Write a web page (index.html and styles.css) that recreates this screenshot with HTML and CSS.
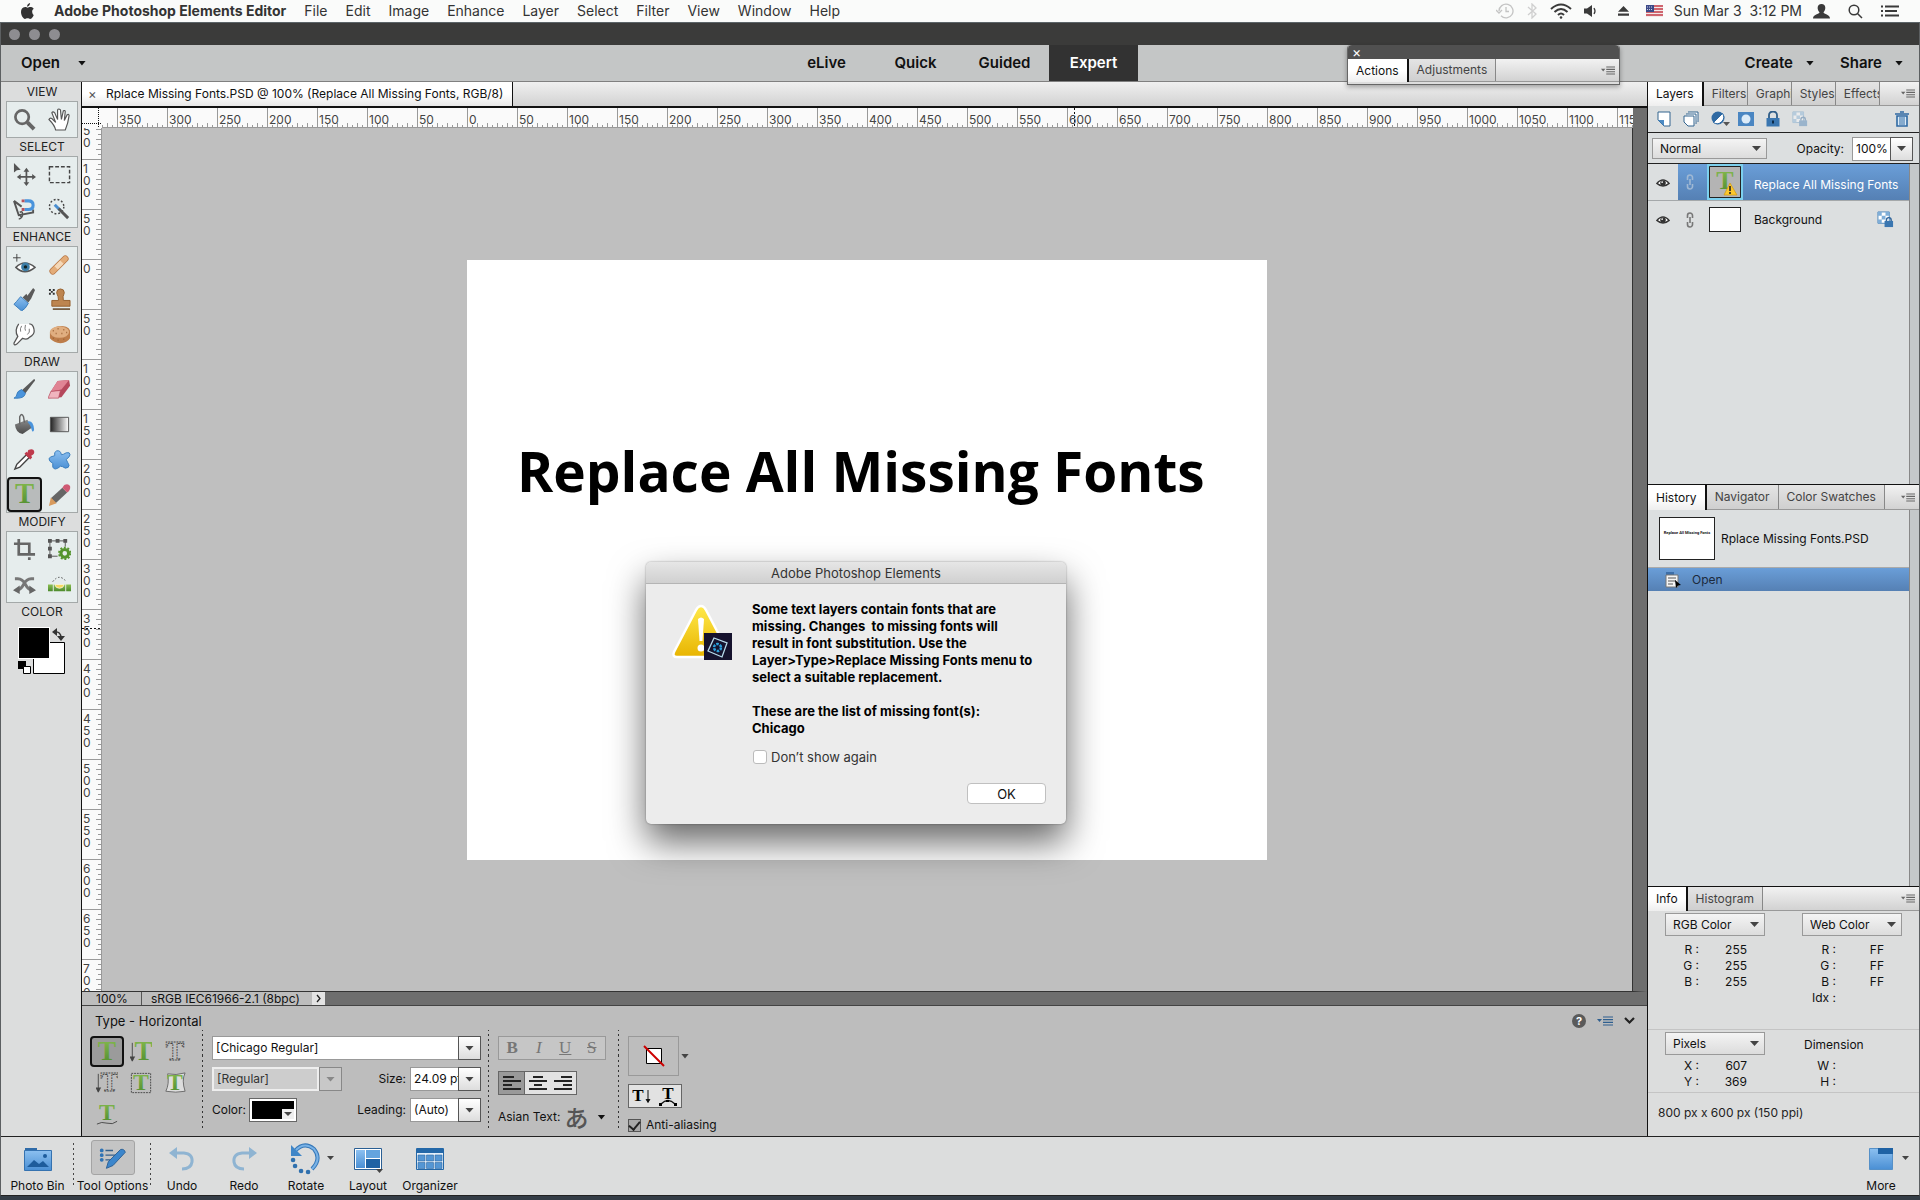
FILE: index.html
```html
<!DOCTYPE html>
<html lang="en">
<head>
<meta charset="utf-8">
<title>Adobe Photoshop Elements Editor</title>
<link rel="stylesheet" href="styles.css">
</head>
<body>
<svg class="defs" aria-hidden="true">
  <defs>
    <linearGradient id="green" x1="0" y1="0" x2="0" y2="1"><stop offset="0" stop-color="#8bbf52"/><stop offset="1" stop-color="#4c8a2c"/></linearGradient>
    <linearGradient id="blue" x1="0" y1="0" x2="0" y2="1"><stop offset="0" stop-color="#8cc0f0"/><stop offset="1" stop-color="#4a8fd4"/></linearGradient>
    <linearGradient id="dark" x1="0" y1="0" x2="0" y2="1"><stop offset="0" stop-color="#8a8a8a"/><stop offset="1" stop-color="#4a4a4a"/></linearGradient>
    <linearGradient id="fade" x1="0" y1="0" x2="1" y2="0"><stop offset="0" stop-color="#222"/><stop offset="1" stop-color="#fff"/></linearGradient>
    <linearGradient id="gold" x1="0" y1="0" x2="0" y2="1"><stop offset="0" stop-color="#ffe94a"/><stop offset="1" stop-color="#e8b400"/></linearGradient>
  </defs>
  <symbol id="panel-menu" viewBox="0 0 16 10"><path d="M0 3h5L2.500 6z"/><path d="M6 1h10M6 3.700h10M6 6.400h10M6 9h10" stroke="currentColor" stroke-width="1.200"/></symbol>
  <symbol id="eye" viewBox="0 0 16 12"><path d="M1 7Q8-1 15 7Q8 13 1 7z" fill="#fff" stroke="#333" stroke-width="1.600"/><circle cx="8" cy="6.500" r="3.200" fill="#333"/><circle cx="7" cy="5.500" r="1" fill="#fff"/></symbol>
  <symbol id="link" viewBox="0 0 8 16"><path d="M1.500 6V3.500a2.500 2.500 0 0 1 5 0V6M1.500 10v2.500a2.500 2.500 0 0 0 5 0V10M4 5v6" fill="none" stroke="currentColor" stroke-width="1.600"/></symbol>
  <symbol id="checker-lock" viewBox="0 0 18 18"><path d="M1 1h12v12H1z" fill="#fff" stroke="#4c87bb"/><path d="M1 1h4v4H1zM9 1h4v4H9zM5 5h4v4H5zM1 9h4v4H1z" fill="#7faed8"/><path d="M10 11V9.500a2.500 2.500 0 0 1 5 0V11" fill="none" stroke="#2e6399" stroke-width="1.500"/><path d="M8 10.500h9V17H8z" fill="#3a76b0"/></symbol>
</svg>

<header class="menubar">
  <svg class="apple" viewBox="0 0 14 17"><path d="M9.800 0C9.900 2 8.300 3.900 6.500 3.900 6.300 2.100 8 .2 9.800 0zM12 9c0-2 1.700-2.800 1.700-2.900C12.500 4.500 11 4.300 10.300 4.300 9 4.200 7.900 5 7.200 5 6.500 5 5.500 4.300 4.400 4.300 1.500 4.400 0 6.800 0 9.500 0 13 2.500 17 4.300 17c1 0 1.500-.7 2.800-.7s1.700.7 2.800.7c1.900 0 3.500-3.400 3.800-4.300C13.600 12.700 12 11.700 12 9z"/></svg>
  <nav class="menus">
    <a href="#" class="app">Adobe Photoshop Elements Editor</a><a href="#">File</a><a href="#">Edit</a><a href="#">Image</a><a href="#">Enhance</a><a href="#">Layer</a><a href="#">Select</a><a href="#">Filter</a><a href="#">View</a><a href="#">Window</a><a href="#">Help</a>
  </nav>
  <div class="status">
    <svg width="18" height="16" viewBox="0 0 18 16" fill="none" stroke="#c4c4c4" stroke-width="1.300"><path d="M3 8a7 6.800 0 1 1 2 4.800M0 7l3 3 3-3M10 4v4.500h3"/></svg>
    <svg class="bt" width="10" height="16" viewBox="0 0 10 16" fill="none" stroke="#cfcfcf" stroke-width="1.300"><path d="M1 4l8 7-4 4V1l4 4-8 7"/></svg>
    <svg width="22" height="16" viewBox="0 0 22 16" fill="none" stroke="#3a3a3a" stroke-width="2"><path d="M1 6Q11-3 21 6M4.500 9Q11 3 17.500 9M8 12q3-3 6 0"/><circle cx="11" cy="14.500" r="1.300" fill="#3a3a3a" stroke="none"/></svg>
    <svg width="18" height="14" viewBox="0 0 18 14"><path d="M1 4.500h3L9 1v12L4 9.500H1z" fill="#3a3a3a"/><path d="M11 4q2 3 0 6" fill="none" stroke="#3a3a3a" stroke-width="1.300"/></svg>
    <svg class="eject" width="11" height="12" viewBox="0 0 13 12" fill="#3a3a3a"><path d="M6.500 0L13 7H0zM0 9h13v2.500H0z"/></svg>
    <svg width="17" height="12" viewBox="0 0 17 12"><path d="M0 0h17v12H0z" fill="#f3e8e8"/><path d="M0 1h17M0 4h17M0 7h17M0 10h17" stroke="#c43a46" stroke-width="1.500"/><path d="M0 0h8v7H0z" fill="#3c4a88"/><path d="M1 2h6M1 4.500h6" stroke="#c8cce0" stroke-dasharray="1 1"/></svg>
    <time>Sun Mar 3&nbsp; 3:12 PM</time>
    <svg width="17" height="15" viewBox="0 0 17 15" fill="#3a3a3a"><path d="M8.500 0c5 0 4.500 6 2 8.300.2 2 6.500 2 6.500 6.200H0C0 10.300 6.300 10.300 6.500 8.300 4 6 3.500 0 8.500 0z"/></svg>
    <svg width="15" height="15" viewBox="0 0 15 15" fill="none" stroke="#3a3a3a" stroke-width="1.500"><circle cx="6" cy="6" r="4.800"/><path d="M9.500 9.500L14 14"/></svg>
    <svg width="18" height="12" viewBox="0 0 18 12" stroke="#3a3a3a" stroke-width="2"><path d="M0 1.500h2M4 1.500h14M0 6h2M4 6h12M0 10.500h2M4 10.500h14"/></svg>
  </div>
</header>

<main class="window">
  <div class="titlebar"><i></i><i></i><i></i></div>
  <div class="modebar">
    <div><button class="drop">Open</button></div>
    <nav class="modes"><button>eLive</button><button>Quick</button><button>Guided</button><button class="on">Expert</button></nav>
    <div class="right"><button class="drop">Create</button><button class="drop">Share</button></div>
  </div>

  <div class="workspace">
    <aside class="toolbox">
      <h2>VIEW</h2>
      <div class="tools">
        <button aria-label="Zoom"><svg viewBox="0 0 24 24" fill="none" stroke="#666"><circle cx="9.500" cy="9.500" r="7" stroke-width="2.800"/><path d="M15 15l7 7" stroke-width="4.200"/></svg></button>
        <button aria-label="Hand"><svg viewBox="0 0 24 24"><path d="M8 23Q7 18 1 12q1-2 3-1l4 4L4 5q1-2 3 0l3 7L10 2q1-2 3 0l1 10 2-9q2-1 2 1l-1 9 3-6q2-1 2 1-1 8-4 15z" fill="#fff" stroke="#555" stroke-width="1.200"/></svg></button>
      </div>
      <h2>SELECT</h2>
      <div class="tools">
        <button aria-label="Move"><svg viewBox="0 0 24 24"><path d="M1 0l7 7-4 .5L1 10z" fill="#555"/><path d="M14 7v15M6 14.500h16" stroke="#555" stroke-width="1.800"/><path d="M14 5l3 4h-6zM14 24l3-4h-6zM4 14.500l4-3v6zM24 14.500l-4-3v6z" fill="#555"/></svg></button>
        <button aria-label="Marquee"><svg viewBox="0 0 24 24"><path d="M1.500 4h21v16.500h-21z" fill="none" stroke="#444" stroke-width="1.500" stroke-dasharray="4 2"/></svg></button>
        <button aria-label="Lasso"><svg viewBox="0 0 24 24"><path d="M1 3l5 15 15-3v-3M1 3l8 6" fill="none" stroke="#555" stroke-width="2"/><path d="M7 15q3-2 3 2t-4 5M6 17l3 3" fill="none" stroke="#555" stroke-width="1.500"/><path d="M12 3h4q5 0 5 4.500T16 12h-4" fill="none" stroke="#4a94dc" stroke-width="3.200"/><path d="M9 1.500h3v3H9zM9 10.500h3v3H9z" fill="#b8505c"/></svg></button>
        <button aria-label="Quick selection"><svg viewBox="0 0 24 24"><circle cx="9" cy="9" r="7.500" fill="none" stroke="#444" stroke-width="1.500" stroke-dasharray="2 2"/><path d="M7 7l6 6" stroke="#4a8ed0" stroke-width="3"/><path d="M11 11l10 10" stroke="#555" stroke-width="3"/></svg></button>
      </div>
      <h2>ENHANCE</h2>
      <div class="tools">
        <button aria-label="Red eye"><svg viewBox="0 0 24 24"><path d="M4 1v8M0 5h8" stroke="#444"/><path d="M3 15q9-9 20 0-11 9-20 0z" fill="#fff" stroke="#555" stroke-width="1.500"/><circle cx="13" cy="14.500" r="4.500" fill="#3b7da6"/><circle cx="13" cy="14.500" r="1.800" fill="#122"/></svg></button>
        <button aria-label="Spot healing"><svg viewBox="0 0 24 24"><path d="M5 19L18 6" stroke="#b87746" stroke-width="7" stroke-linecap="round"/><path d="M5 19L18 6" stroke="#e3ac78" stroke-width="5.500" stroke-linecap="round"/><path d="M8.500 15.500l6-6" stroke="#f4d8b8" stroke-width="5"/></svg></button>
        <button aria-label="Smart brush"><svg viewBox="0 0 24 24"><path d="M15 8l6-8 2 2-4 9-3 4-6-5 4-4z" fill="#5a5a5a"/><path d="M8 9l8 7q-3 6-7 8L1 17q2-2 7-8z" fill="url(#blue)" stroke="#3a7dbd"/></svg></button>
        <button aria-label="Clone stamp"><svg viewBox="0 0 24 24"><path d="M1 1h2v2H1zM5 1h2v2H5zM3 3h2v2H3zM1 5h2v2H1zM5 5h2v2H5z" fill="#333"/><path d="M13 1q4 0 4 4-2 4-1 8h7v6H4v-6h7q0-4-2-8 0-4 4-4z" fill="#bd8550" stroke="#96602e"/><path d="M5 22h18" stroke="#5b3a1a" stroke-width="1.500"/></svg></button>
        <button aria-label="Smudge"><svg viewBox="0 0 24 24"><path d="M6 1q-5 7-1 13L1 21q0 3 3 1l6-6q5 2 7-1 6-3 5-8-1-6-5-6" fill="#fff" stroke="#555" stroke-width="1.300"/><path d="M9 3q-2 3-1 6M13 2q-1 4 0 6M17 6q1 4-2 6" fill="none" stroke="#777"/></svg></button>
        <button aria-label="Sponge"><svg viewBox="0 0 24 24"><path d="M2 9q3-6 13-6 9 1 8 7v6q-3 5-10 5T2 16z" fill="#bd7d4a"/><ellipse cx="12" cy="9.500" rx="10" ry="6" fill="#e0ae80"/><path d="M5 8h1m4-2h1m5 1h1M8 11h1m5 0h1m4-1h1M5 16h1m4 2h1m5-1h1" stroke="#9c6233" stroke-width="1.500"/></svg></button>
      </div>
      <h2>DRAW</h2>
      <div class="tools">
        <button aria-label="Brush"><svg viewBox="0 0 24 24"><path d="M22 1q2 1 0 3L13 16l-4-3z" fill="#5a5a5a"/><path d="M9 12l4 4q-1 6-12 5 3-1 3-4t5-5z" fill="#4a94dc" stroke="#3a7dbd"/></svg></button>
        <button aria-label="Eraser"><svg viewBox="0 0 24 24"><path d="M10 3l12-1 1 6-9 12-13 1 2-7z" fill="#b5485c"/><path d="M10 3l12-1-8 10-11 2z" fill="#e08494"/><path d="M3 14l10-1-2 8H0z" fill="#f0b4be" stroke="#b5485c" stroke-width=".7"/></svg></button>
        <button aria-label="Paint bucket"><svg viewBox="0 0 24 24"><path d="M2 12l13-5 5 8-10 7q-7-1-8-10z" fill="url(#dark)"/><path d="M7 12V4q2-5 4 0l1 6" fill="none" stroke="#666" stroke-width="1.500"/><path d="M15 9q6-2 7 8 0 3-2 2l-2-6z" fill="#4a94dc"/></svg></button>
        <button aria-label="Gradient"><svg viewBox="0 0 24 24"><path d="M2.500 4.500h19v15h-19z" fill="url(#fade)" stroke="#555"/></svg></button>
        <button aria-label="Color picker"><svg viewBox="0 0 24 24"><path d="M2 22l2-5L14 7l3 3L7 20z" fill="#fff" stroke="#444" stroke-width="1.500"/><path d="M12 6l6 6 2-2-1-2q4-2 3-5t-6-1l-1 3-1-1z" fill="#bf3a4c"/></svg></button>
        <button aria-label="Custom shape"><svg viewBox="0 0 24 24"><path d="M9 3Q13 2 14 7q2 0 5-2 4-1 4 2 0 2-4 5 2 4 3 6 0 3-4 3-3-2-5-2-3 3-6 3-3-1-2-6-4-2-4-5 1-2 6-3-1-4 2-5z" fill="url(#blue)" stroke="#3a7dbd"/></svg></button>
        <button aria-label="Type" class="on"><svg viewBox="0 0 24 24"><text x="12" y="21" class="tee">T</text></svg></button>
        <button aria-label="Pencil"><svg viewBox="0 0 24 24"><path d="M15 5l5 5L8 21l-5-5z" fill="#666"/><path d="M3 15l6 6-8 3z" fill="#d89a5c"/><path d="M15 5l2-3q4-2 6 1 1 4-3 7z" fill="#cf5a74"/></svg></button>
      </div>
      <h2>MODIFY</h2>
      <div class="tools">
        <button aria-label="Crop"><svg viewBox="0 0 24 24" fill="none" stroke="#666" stroke-width="2.800"><path d="M6 1v16h17M1 6h16v11M17 20v3"/></svg></button>
        <button aria-label="Recompose"><svg viewBox="0 0 24 24"><path d="M2 3h16v6M2 3v16h8" fill="none" stroke="#555"/><path d="M0 1h4v4H0zM8 1h4v4H8zM16 1h4v4h-4zM0 9h4v4H0zM0 17h4v4H0z" fill="#555"/><circle cx="17.500" cy="16" r="4" fill="none" stroke="#55942e" stroke-width="3.200"/><circle cx="17.500" cy="16" r="6" fill="none" stroke="#55942e" stroke-width="2" stroke-dasharray="2 1.800"/></svg></button>
        <button aria-label="Content-aware move"><svg viewBox="0 0 24 24"><path d="M2 6h3q5 0 8 6t8 6M22 6h-3q-5 0-8 6t-8 6" fill="none" stroke="#777" stroke-width="3"/><path d="M0 18l7-5v9zM24 18l-7-5v9z" fill="#666"/></svg></button>
        <button aria-label="Straighten"><svg viewBox="0 0 24 24"><path d="M0 12h5v7H0zM6 12h12v7H6zM19 12h5v7h-5z" fill="url(#green)"/><path d="M7 12h10q-1 4-5 4t-5-4z" fill="#f6d860" stroke="#fff" stroke-width=".7"/><path d="M5 9q7-9 14 0" fill="none" stroke="#444" stroke-dasharray="1.500 2"/></svg></button>
      </div>
      <h2>COLOR</h2>
      <svg class="colors" width="48" height="50" viewBox="0 0 48 50"><path d="M15.500 16.500h31v31h-31z" fill="#fff" stroke="#000"/><path d="M0 1h32v32H0z" fill="#fff"/><path d="M1 2h30v30H1z"/><path d="M36 6q7-1 7 6" fill="none" stroke="#333" stroke-width="1.500"/><path d="M34 6l5-4v8zM43 15l-4-5h8z" fill="#333"/><path d="M0 35h8v8H0z"/><path d="M5.500 40.500h7v7h-7z" fill="#fff" stroke="#000"/></svg>
    </aside>

    <section class="center">
      <div class="doctabs"><button class="doctab"><span class="x">×</span>Rplace Missing Fonts.PSD @ 100% (Replace All Missing Fonts, RGB/8)</button></div>
      <div class="docarea">
        <div class="corner"></div>
        <ol class="ruler-h"><li>350</li><li>300</li><li>250</li><li>200</li><li>150</li><li>100</li><li>50</li><li>0</li><li>50</li><li>100</li><li>150</li><li>200</li><li>250</li><li>300</li><li>350</li><li>400</li><li>450</li><li>500</li><li>550</li><li class="mark">600</li><li>650</li><li>700</li><li>750</li><li>800</li><li>850</li><li>900</li><li>950</li><li>1000</li><li>1050</li><li>1100</li><li>1150</li></ol>
        <div class="ruler-v"><ol><li>150</li><li>100</li><li>50</li><li>0</li><li>50</li><li>100</li><li>150</li><li>200</li><li>250</li><li>300</li><li class="mark">350</li><li>400</li><li>450</li><li>500</li><li>550</li><li>600</li><li>650</li><li>700</li></ol></div>
        <div class="pasteboard"><div class="artboard"><p>Replace All Missing Fonts</p></div></div>
      </div>
      <div class="docstatus"><span class="zoom">100%</span><span class="profile">sRGB IEC61966-2.1 (8bpc)</span><button aria-label="More info"><svg width="5" height="9" viewBox="0 0 5 9" fill="none" stroke="#222" stroke-width="1.300"><path d="M1 1l3 3.500L1 8"/></svg></button></div>

      <div class="options">
        <div class="opt-head"><h3>Type - Horizontal</h3>
          <div class="opt-icons">
            <svg width="14" height="14" viewBox="0 0 14 14"><circle cx="7" cy="7" r="7" fill="#5a5a5a"/><text x="7" y="11" class="q">?</text></svg>
            <svg class="bluemenu" width="16" height="10"><use href="#panel-menu"/></svg>
            <svg width="11" height="8" viewBox="0 0 11 8"><path d="M1 1l4.500 4.500L10 1" fill="none" stroke="#222" stroke-width="2.200"/></svg>
          </div>
        </div>
        <div class="opt-body">
          <div class="types">
            <button class="on" aria-label="Horizontal type"><svg viewBox="0 0 24 24"><text x="12" y="21" class="tee">T</text></svg></button>
            <button aria-label="Vertical type"><svg viewBox="0 0 24 24"><text x="15" y="21" class="tee">T</text><path d="M2.500 2v18M0 17l2.500 5L5 17" stroke="#444" fill="#444"/></svg></button>
            <button aria-label="Horizontal mask"><svg viewBox="0 0 24 24"><text x="12" y="21" class="tee dash">T</text></svg></button>
            <button aria-label="Vertical mask"><svg viewBox="0 0 24 24"><text x="15" y="21" class="tee dash">T</text><path d="M2.500 2v18M0 17l2.500 5L5 17" stroke="#444" fill="#444"/></svg></button>
            <button aria-label="Type on selection"><svg viewBox="0 0 24 24"><path d="M1.500 1.500h21v21h-21z" fill="none" stroke="#444" stroke-dasharray="2 1"/><text x="12" y="20" class="tee small">T</text></svg></button>
            <button aria-label="Type on shape"><svg viewBox="0 0 24 24"><path d="M4 2q9 2 19-1-4 8 0 20-10 2-21 0 4-8 2-19z" fill="#ddd" stroke="#666"/><text x="12" y="20" class="tee small">T</text></svg></button>
            <button aria-label="Type on path"><svg viewBox="0 0 24 24"><text x="12" y="18" class="tee small">T</text><path d="M1 23q5-3 11-1t11-2" fill="none" stroke="#444"/></svg></button>
          </div>
          <div class="fonts">
            <div class="row"><span class="combo wide"><input aria-label="Font" value="[Chicago Regular]"><button class="arrow" aria-label="Fonts"></button></span></div>
            <div class="row"><span class="combo style"><input aria-label="Style" value="[Regular]" disabled><button class="arrow" aria-label="Styles" disabled></button></span><label for="size">Size:</label><span class="combo"><input id="size" value="24.09 pt"><button class="arrow" aria-label="Sizes"></button></span></div>
            <div class="row"><span>Color:</span><button class="swatch" aria-label="Text color"><svg width="12" height="10" viewBox="0 0 12 10"><path d="M0 0h12v10H0z" fill="#eee"/><path d="M2 3h8L6 7z" fill="#444"/></svg></button><label for="lead">Leading:</label><span class="combo"><input id="lead" value="(Auto)"><button class="arrow" aria-label="Leadings"></button></span></div>
          </div>
          <div class="format">
            <div class="biu"><button><b>B</b></button><button><i>I</i></button><button><u>U</u></button><button><s>S</s></button></div>
            <div class="align">
              <button class="on" aria-label="Left"><svg viewBox="0 0 18 16"><path d="M0 2h11M0 6h18M0 10h9M0 14h18"/></svg></button>
              <button aria-label="Center"><svg viewBox="0 0 18 16"><path d="M4 2h10M0 6h18M5 10h8M0 14h18"/></svg></button>
              <button aria-label="Right"><svg viewBox="0 0 18 16"><path d="M7 2h11M0 6h18M9 10h9M0 14h18"/></svg></button>
            </div>
            <div class="asian">Asian Text:<button class="drop"><span lang="ja">あ</span></button></div>
          </div>
          <div class="effects">
            <div class="stylebox"><button aria-label="Style"><svg width="22" height="22" viewBox="0 0 22 22"><path d="M3.500 3.500h15v15h-15z" fill="#fff" stroke="#000"/><path d="M1 1l20 20" stroke="#c00" stroke-width="2"/></svg></button><i class="tri"></i></div>
            <div class="orient">
              <button aria-label="Toggle orientation"><svg width="20" height="20" viewBox="0 0 20 20"><text x="6" y="15" class="serif">T</text><path d="M16 4v12M14 13l2 3.500 2-3.500" stroke="#111" fill="#111"/></svg></button>
              <button aria-label="Warp"><svg width="20" height="20" viewBox="0 0 20 20"><text x="10" y="13" class="serif">T</text><path d="M3 18q7-7 14 0" fill="none" stroke="#111" stroke-width="1.300"/><path d="M1 17h3v3H1zM8 14h3v2H8zM16 17h3v3h-3z"/></svg></button>
            </div>
            <label class="aa"><input type="checkbox" checked>Anti-aliasing</label>
          </div>
        </div>
      </div>
    </section>

    <aside class="panels">
      <section class="panel layers">
        <div class="tabs"><button class="on">Layers</button><button class="cut">Filters</button><button class="cut">Graphics</button><button class="cut">Styles</button><button class="cut">Effects</button><button class="pm" aria-label="Panel menu"><svg width="14" height="9"><use href="#panel-menu"/></svg></button></div>
        <div class="layer-tools">
          <svg viewBox="0 0 16 16"><path d="M2 1h12v14H8L2 9z" fill="#fff" stroke="#33648f"/><path d="M2 9h6v6z" fill="#4b8ac4"/></svg>
          <svg viewBox="0 0 16 16"><path d="M5 1h10v10M3 3h10v10" fill="#fff" stroke="#33648f"/><path d="M1 5h10v10H5l-4-4z" fill="#fff" stroke="#33648f"/></svg>
          <svg class="adjust" viewBox="0 0 20 16"><circle cx="8" cy="7" r="6.500" fill="#2f6aa3"/><path d="M12.500 2.500a6.500 6.500 0 0 1-9 9z" fill="#fff" stroke="#2f6aa3"/><path d="M13 11h7l-3.500 4z" fill="#555"/></svg>
          <svg viewBox="0 0 16 16"><path d="M0 1h16v14H0z" fill="#4a86c2"/><circle cx="8" cy="8" r="4.500" fill="#dcebf8"/></svg>
          <svg viewBox="0 0 16 16"><path d="M4 8V4a4 3.500 0 0 1 8 0v4" fill="none" stroke="#2f5d88" stroke-width="1.800"/><path d="M1.500 7h13v8.500h-13z" fill="#3a76b0"/><path d="M8 9.500v3" stroke="#0c2a48" stroke-width="2"/></svg>
          <svg class="dim"><use href="#checker-lock"/></svg>
          <svg class="trash" viewBox="0 0 16 16"><path d="M1 3h14M6 1h4M3 5h10v10H3z" fill="#dcebf8" stroke="#2f6aa3" stroke-width="1.600"/><path d="M6 6v8M8 6v8M10 6v8" stroke="#2f6aa3"/></svg>
        </div>
        <div class="blend"><span class="select"><select aria-label="Blend mode"><option>Normal</option></select></span><label for="opacity">Opacity:</label><span class="combo op"><input id="opacity" value="100%"><button class="arrow" aria-label="Opacity slider"></button></span></div>
        <div class="scroll">
          <div class="layer on"><svg class="eye"><use href="#eye"/></svg><div class="name"><svg class="lnk"><use href="#link"/></svg><svg class="thumb sel" viewBox="0 0 32 32"><path d="M.5.5h31v31H.5z" fill="#b4b4b4" stroke="#222"/><text x="16" y="23" class="tee small">T</text><path d="M21 17l7 12H15z" fill="#fbc72c" stroke="#d39a10" stroke-width=".7"/><path d="M21 20v5M21 26v2" stroke="#222" stroke-width="1.600"/></svg><span>Replace All Missing Fonts</span></div></div>
          <div class="layer"><svg class="eye"><use href="#eye"/></svg><div class="name"><svg class="lnk"><use href="#link"/></svg><span class="thumb blank"></span><span>Background</span><svg class="lock"><use href="#checker-lock"/></svg></div></div>
        </div>
      </section>
      <section class="panel history">
        <div class="tabs"><button class="on">History</button><button>Navigator</button><button>Color Swatches</button><button class="pm" aria-label="Panel menu"><svg width="14" height="9"><use href="#panel-menu"/></svg></button></div>
        <div class="scroll">
          <div class="snapshot"><div class="mini">Replace All Missing Fonts</div>Rplace Missing Fonts.PSD</div>
          <div class="state"><svg width="16" height="16" viewBox="0 0 16 16"><path d="M1 0h8v3H1z" fill="#3c6ea8"/><path d="M1 3h12v12H1z" fill="#f4f4f4" stroke="#777"/><path d="M3 6h8M3 9h8M3 12h5" stroke="#555"/><path d="M10 8l6 5-3 .5-2 2.500z"/></svg>Open</div>
        </div>
      </section>
      <section class="panel info">
        <div class="tabs"><button class="on">Info</button><button>Histogram</button><button class="pm" aria-label="Panel menu"><svg width="14" height="9"><use href="#panel-menu"/></svg></button></div>
        <div class="pair top">
          <div><span class="select"><select aria-label="First color mode"><option>RGB Color</option></select></span><dl><dt>R :</dt><dd>255</dd><dt>G :</dt><dd>255</dd><dt>B :</dt><dd>255</dd></dl></div>
          <div><span class="select"><select aria-label="Second color mode"><option>Web Color</option></select></span><dl><dt>R :</dt><dd>FF</dd><dt>G :</dt><dd>FF</dd><dt>B :</dt><dd>FF</dd><dt>Idx :</dt><dd></dd></dl></div>
        </div>
        <div class="pair bottom">
          <div><span class="select"><select aria-label="Units"><option>Pixels</option></select></span><dl><dt>X :</dt><dd>607</dd><dt>Y :</dt><dd>369</dd></dl></div>
          <div><h4>Dimension</h4><dl><dt>W :</dt><dd></dd><dt>H :</dt><dd></dd></dl></div>
        </div>
        <p>800 px x 600 px (150 ppi)</p>
      </section>
    </aside>
  </div>

  <footer class="taskbar">
    <button class="bin"><svg width="28" height="24" viewBox="0 0 28 24"><path d="M1 3V1h12v3z" fill="#2f6ba8"/><path d="M.5 3.500h27v20H.5z" fill="url(#blue)" stroke="#3572b0"/><path d="M3 20l7-7 5 4 4-3 6 6z" fill="#1d5c9c"/><circle cx="21" cy="9" r="2" fill="#1d5c9c"/></svg><span>Photo Bin</span></button>
    <button class="tool on"><svg width="44" height="35" viewBox="0 0 44 35"><path d="M14 10h8M14 15h11M14 20h6" stroke="#345f8a" stroke-width="1.500"/><path d="M10 10h.1M10 15h.1M10 20h.1" stroke="#2f73b5" stroke-width="4" stroke-linecap="round"/><path d="M30 9q4-1 5 3L22 26l-7 3 2-7z" fill="#3c86cc" stroke="#2a5f94"/></svg><span>Tool Options</span></button>
    <button><svg width="26" height="26" viewBox="0 0 26 26"><path d="M3 7h12q9 1 8 9-1 7-10 7" fill="none" stroke="#8fb4d2" stroke-width="3"/><path d="M0 7l8-6v12z" fill="#8fb4d2"/></svg><span>Undo</span></button>
    <button><svg width="26" height="26" viewBox="0 0 26 26"><path d="M23 7H11q-9 1-8 9 1 7 10 7" fill="none" stroke="#8fb4d2" stroke-width="3"/><path d="M26 7l-8-6v12z" fill="#8fb4d2"/></svg><span>Redo</span></button>
    <button class="has"><svg width="32" height="32" viewBox="0 0 32 32"><path d="M5 8Q14-2 24 6q8 10-2 20" fill="none" stroke="#3678b8" stroke-width="4"/><path d="M5 8Q14-2 24 6q8 10-2 20" fill="none" stroke="#79b2e6" stroke-width="2"/><path d="M1 2v11h11z" fill="#3f86c8"/><path d="M3 17h.1M5 23h.1M11 28h.1M18 29h.1" stroke="#2f70ae" stroke-width="4.500" stroke-linecap="round"/></svg><span>Rotate</span></button>
    <button class="has low"><svg width="28" height="22" viewBox="0 0 28 22"><path d="M.5.5h27v21H.5z" fill="#fff" stroke="#2a5f94"/><path d="M2 2h9v18H2z" fill="url(#blue)"/><path d="M12 2h14v8H12z" fill="#64a4de"/><path d="M12 11h14v9H12z" fill="#1f62a4"/></svg><span>Layout</span></button>
    <button><svg width="28" height="22" viewBox="0 0 28 22"><path d="M.5.5h27v21H.5z" fill="#e4effa" stroke="#2468a8"/><path d="M1 1h26v4H1z" fill="#2468a8"/><path d="M2 7h7v6H2zM10.500 7h7v6h-7zM19 7h7v6h-7zM2 14.500h7v6H2zM10.500 14.500h7v6h-7zM19 14.500h7v6h-7z" fill="#5496d4" stroke="#2f6aa3" stroke-width=".6"/></svg><span>Organizer</span></button>
    <button class="has more"><svg width="24" height="22" viewBox="0 0 24 22"><path d="M.5.5h23v21H.5z" fill="url(#blue)" stroke="#5590c8"/><path d="M9 0h15v6H9z" fill="#1f62a4"/></svg><span>More</span></button>
  </footer>
</main>

<section class="floating">
  <div class="grip">×</div>
  <div class="tabs"><button class="on">Actions</button><button>Adjustments</button><button class="pm" aria-label="Panel menu"><svg width="14" height="9"><use href="#panel-menu"/></svg></button></div>
</section>

<section class="dialog" role="dialog" aria-labelledby="dlg">
  <h1 id="dlg">Adobe Photoshop Elements</h1>
  <div class="dlg-body">
    <svg width="62" height="60" viewBox="0 0 62 60"><path d="M30 3q3 0 5 4l22 42q2 5-3 5H6q-5 0-3-5L25 7q2-4 5-4z" fill="url(#gold)" stroke="#fff" stroke-width="2.500"/><path d="M27 16q3-3 6 0l-1.500 22h-3z" fill="#fff"/><circle cx="30" cy="45" r="3.500" fill="#fff"/><path d="M33 30h28v27H33z" fill="#16132e"/><path d="M43 35l13 5-5 14-14-6z" fill="none" stroke="#b8dcec" stroke-width="1.300"/><circle cx="46.500" cy="44.500" r="3.500" fill="none" stroke="#2ca0dc" stroke-width="2.500" stroke-dasharray="2.500 1.200"/></svg>
    <div class="dlg-text">
      <p>Some text layers contain fonts that are<br>missing. Changes&nbsp; to missing fonts will<br>result in font substitution. Use the<br>Layer&gt;Type&gt;Replace Missing Fonts menu to<br>select a suitable replacement.<br><br>These are the list of missing font(s):<br>Chicago</p>
      <label><input type="checkbox">Don’t show again</label>
    </div>
  </div>
  <button class="ok">OK</button>
</section>
</body>
</html>
```

FILE: styles.css
```css
* { box-sizing: border-box; }
body { margin: 0; min-height: 100vh; display: flex; flex-direction: column; background: #343d46; font: 12px/16px Inter, "Liberation Sans", sans-serif; color: #111; }
button, input, select { font: inherit; color: inherit; margin: 0; }
button { background: none; border: 0; padding: 0; display: flex; align-items: center; justify-content: center; }
h1, h2, h3, h4, p, ol, dl, dd { margin: 0; padding: 0; font-weight: 400; font-size: inherit; }
ol { list-style: none; }
svg { display: block; flex: none; }
a { color: inherit; text-decoration: none; }
.defs { position: absolute; width: 0; height: 0; }
.tee { font: bold 30px "Liberation Serif", serif; fill: url(#green); text-anchor: middle; }
.tee.small { font-size: 26px; }
.tee.dash { fill: none; stroke: #444; stroke-width: 1px; stroke-dasharray: 2 1; }
.serif { font: bold 17px "Liberation Serif", serif; text-anchor: middle; }
.q { font: bold 11px Inter, sans-serif; fill: #fff; text-anchor: middle; }

/* system menu bar */
.menubar { height: 22px; display: flex; align-items: center; background: #fafbfa; font-size: 14px; color: #333; }
.apple { width: 13px; height: 16px; margin-left: 21px; fill: #333; }
.menus { display: flex; gap: 18px; margin-left: 20px; flex: 1; white-space: nowrap; }
.app { font-weight: 700; }
.status { display: flex; align-items: center; gap: 11px; margin-right: 21px; }
.status time { white-space: nowrap; }
.status .bt { margin: 0 2px; }
.status .eject { margin: 0 6px; }
.status svg:nth-last-child(-n+2) { margin-left: 7px; }

.window { flex: 1; display: flex; flex-direction: column; border: 1px solid #5c5f61; border-top-color: #5c6468; border-bottom-color: #222; margin-bottom: 4px; background: #dcdddd; }
.titlebar { height: 22px; background: #3b3b3a; display: flex; align-items: center; gap: 9px; padding-left: 8px; }
.titlebar i { width: 11px; height: 11px; border-radius: 50%; background: #8e8d91; }
.modebar { height: 37px; display: grid; grid-template-columns: 1fr auto 1fr; background: #c4c6c6; border-bottom: 1px solid #808080; font-size: 15px; font-weight: 600; }
.modebar > div { display: flex; align-items: center; padding-left: 20px; }
.modebar .right { justify-content: flex-end; gap: 26px; padding-right: 16px; }
.drop::after, .tri { content: ""; width: 8px; height: 5px; background: #111; clip-path: polygon(0 0, 100% 0, 50% 100%); margin-left: 14px; }
.modebar .drop::after { margin-left: 18px; }
.modebar .right .drop::after { margin-left: 13px; }
.modes { display: flex; }
.modes button { width: 89px; }
.modes .on { background: #323232; color: #fff; }

.workspace { flex: 1; display: grid; grid-template-columns: 81px minmax(0, 1fr) 272px; }

/* tool palette */
.toolbox { border-right: 1px solid #111; padding: 1px 3px 0 5px; }
.toolbox h2 { height: 18px; line-height: 18px; text-align: center; font-size: 12px; color: #222; }
.tools { display: grid; grid-template-columns: 35px 35px; grid-auto-rows: 35px; border: 1px solid #a4a9a9; background: #e6eded; }
.tools svg { width: 23px; height: 23px; }
.tools button.on { border: 2px solid #111; border-radius: 4px; background: #b8bbbb; }
.colors { margin: 5px 0 0 12px; }

/* document */
.center { display: flex; flex-direction: column; min-width: 0; }
.doctabs { height: 26px; display: flex; background: linear-gradient(#f0f0f0, #d2d2d2); border-bottom: 2px solid #111; }
.doctab { background: linear-gradient(#fff 50%, #e8e8e8); border-right: 1px solid #111; padding: 0 9px 0 6px; white-space: nowrap; }
.doctab .x { color: #555; width: 18px; text-align: left; font-size: 13px; }
.docarea { flex: 1; display: grid; grid-template: 20px 1fr / 20px minmax(0, 1fr); border-right: 14px solid #6e6e6e; border-bottom: 1px solid #333; }
.corner { background: linear-gradient(#111 50%, transparent 50%) 16px 0 / 1px 2px repeat-y, linear-gradient(90deg, #111 50%, transparent 50%) 0 15px / 2px 1px repeat-x, #fafafa; }
.ruler-h, .ruler-v ol { font-size: 12px; color: #444; }
.ruler-h { display: flex; overflow: hidden; padding-left: 15px; border-bottom: 1px solid #999; background: repeating-linear-gradient(90deg, #999 0 1px, transparent 1px 10px) 5px 100% / 100% 4px no-repeat, repeating-linear-gradient(90deg, #999 0 1px, transparent 1px 10px) 0 100% / 100% 2px no-repeat, #fafafa; }
.ruler-h li { flex: 0 0 50px; border-left: 1px solid #999; padding: 4px 0 0 1px; line-height: 15px; }
.ruler-h .mark { background: linear-gradient(#111 50%, transparent 50%) 6px 0 / 1px 4px repeat-y; }
.ruler-v { overflow: hidden; contain: size; border-right: 1px solid #999; background: repeating-linear-gradient(#999 0 1px, transparent 1px 10px) 100% 1px / 5px 100% no-repeat, repeating-linear-gradient(#999 0 1px, transparent 1px 10px) 100% 6px / 3px 100% no-repeat, #fafafa; }
.ruler-v ol { margin-top: -19px; }
.ruler-v li { height: 50px; width: 20px; border-top: 1px solid #999; padding: 3px 10px 0 1px; line-height: 12px; word-break: break-all; }
.ruler-v .mark { background: linear-gradient(90deg, #111 50%, transparent 50%) 0 18px / 4px 1px repeat-x; }
.pasteboard { background: #bfbfbf; display: flex; align-items: center; justify-content: center; overflow: hidden; border-right: 1px solid #333; }
.artboard { width: 800px; height: 600px; flex: none; background: #fff; padding: 179px 0 0 50px; white-space: nowrap; }
.artboard p { font: bold 55px/64px "Open Sans", "Noto Sans", sans-serif; color: #000; }
.docstatus { height: 14px; display: flex; align-items: center; background: #6e6e6e; border-bottom: 1px solid #444; line-height: 14px; }
.docstatus > * { height: 13px; background: #bdbdbd; }
.zoom { width: 60px; padding-left: 14px; border-right: 1px solid #555; }
.profile { width: 170px; padding-left: 9px; white-space: nowrap; }
.docstatus button { width: 13px; background: #e4e4e4; }

/* tool options */
.options { height: 130px; background: #bdbdbd; padding: 6px 12px 0 8px; }
.opt-head { display: flex; justify-content: space-between; height: 18px; padding-left: 5px; line-height: 18px; font-size: 13px; }
.opt-icons { display: flex; align-items: center; gap: 11px; }
.bluemenu { color: #2f5f8f; fill: #2f5f8f; }
.opt-body { display: flex; gap: 9px; }
.opt-body > div { height: 98px; padding-top: 6px; }
.opt-body > div + div { border-left: 1px dashed #333; padding-left: 9px; border-image: repeating-linear-gradient(#333 0 2px, transparent 2px 5px) 1; }
.types { width: 103px; display: grid; grid-template: repeat(3, 31px) / repeat(3, 34px); }
.types svg { width: 22px; height: 22px; }
.types .on { border: 2px solid #111; border-radius: 4px; background: #9b9b9b; }
.fonts { display: flex; flex-direction: column; gap: 7px; width: 277px; }
.row { display: flex; align-items: center; width: 269px; height: 24px; }
.row label { flex: 1; text-align: right; padding-right: 4px; }
.combo { display: flex; width: 71px; height: 24px; }
.combo input { flex: 1; min-width: 0; width: 0; border: 1px solid #999; border-right: 0; background: #fff; padding: 0 0 0 3px; border-radius: 0; }
.combo.wide { width: 269px; }
.combo.style { width: 130px; }
.combo input:disabled { background: #cdcdcd; border: 2px solid #eee; color: #333; }
.arrow { width: 23px; border: 1px solid #555; background: linear-gradient(#fff, #ddd); }
.arrow::after, .select::after, .has::after { content: ""; width: 9px; height: 5px; background: #444; clip-path: polygon(0 0, 100% 0, 50% 100%); }
.arrow:disabled { border-color: #888; background: #c8c8c8; }
.arrow:disabled::after { background: #888; }
.swatch { width: 48px; height: 24px; margin-left: 3px; border: 1px solid #666; background: linear-gradient(#000, #000) 2px 2px / 42px 18px no-repeat, #fff; align-items: flex-end; justify-content: flex-end; padding: 0 2px 2px 0; }
.format { width: 121px; }
.format > .biu { display: flex; width: 108px; height: 24px; border: 1px solid #999; background: #c6c6c6; color: #777; font: 17px "Liberation Serif", serif; }
.biu button { flex: 1; }
.align { display: flex; width: 79px; height: 24px; margin-top: 11px; border: 1px solid #666; background: #e2e2e2; }
.align button { flex: 1; }
.align .on { background: #999; border-right: 1px solid #666; }
.align svg { width: 18px; height: 16px; stroke: #222; stroke-width: 2; }
.asian { display: flex; align-items: center; margin-top: 9px; height: 26px; white-space: nowrap; }
.asian span { font: 500 24px/26px "Noto Sans CJK JP", sans-serif; color: #555; margin-left: 4px; }
.asian .drop::after { margin-left: 9px; }
.stylebox { display: flex; align-items: center; }
.stylebox button { width: 51px; height: 40px; border: 1px solid #999; }
.stylebox .tri { margin-left: 2px; background: #444; }
.orient { display: flex; width: 54px; height: 24px; margin-top: 8px; border: 1px solid #666; background: #e2e2e2; }
.orient button { flex: 1; }
.aa { display: flex; align-items: center; gap: 5px; margin-top: 9px; white-space: nowrap; }
.aa input { appearance: none; width: 13px; height: 13px; border: 1px solid #555; background: #a8a8a8; display: grid; place-items: center; }
.aa input::after { content: ""; width: 5px; height: 9px; border: solid #222; border-width: 0 2px 2px 0; rotate: 40deg; translate: 0 -1px; }

/* panels */
.panels { display: flex; flex-direction: column; border-left: 1px solid #111; background: #dcdfe0; min-width: 0; }
.panel { display: flex; flex-direction: column; }
.layers, .history { flex: 1; }
.tabs { display: flex; height: 24px; background: linear-gradient(#f2f2f2, #d2d2d2); border-bottom: 1px solid #999; color: #444; }
.tabs button { padding: 0 8px; border-right: 1px solid #888; background: linear-gradient(#e4e4e4, #cfcfcf); white-space: nowrap; }
.tabs button.on { color: #111; background: linear-gradient(#fff 50%, #eee); border-right: 2px solid #111; margin-bottom: -1px; }
.tabs .cut { width: 44px; justify-content: flex-start; padding-right: 0; overflow: hidden; }
.tabs button.pm { background: none; border: 0; margin-left: auto; padding: 0 4px; color: #666; fill: #666; }
.layer-tools { display: flex; align-items: center; gap: 11px; height: 27px; padding: 0 9px 0 8px; border-bottom: 1px solid #222; }
.layer-tools svg { width: 16px; height: 16px; }
.layer-tools .adjust { width: 20px; margin-right: -3px; }
.dim { opacity: .4; }
.layer-tools .trash { margin-left: auto; }
.blend { display: flex; align-items: center; height: 31px; padding: 1px 6px 0 4px; border-bottom: 1px solid #222; }
.blend label { margin-left: auto; padding-right: 8px; }
.select { display: inline-flex; position: relative; width: 115px; height: 21px; align-items: center; }
.select select { appearance: none; width: 100%; height: 100%; border: 1px solid #999; border-radius: 0; background: linear-gradient(#f4f4f4, #dcdcdc); padding: 0 7px; }
.select::after { position: absolute; right: 6px; pointer-events: none; }
.combo.op { width: 61px; height: 24px; }
.scroll { flex: 1; border-right: 1px solid #888; margin-right: 9px; box-shadow: 9px 0 #c4c8ca; }
.layer { display: flex; height: 37px; align-items: center; border-bottom: 1px solid #a4a8aa; }
.layer .eye { width: 14px; height: 11px; margin: 0 8px; }
.layer .name { flex: 1; height: 36px; display: flex; align-items: center; white-space: nowrap; }
.layer + .layer { border: 0; }
.layer.on .name { background: linear-gradient(#6a9ed8, #5580b4); color: #fff; }
.layer.on span { padding-top: 6px; }
.lnk { width: 8px; height: 16px; margin: 0 15px 0 8px; color: #777; }
.on .lnk { color: #9fb8d4; }
.thumb { width: 32px; height: 32px; margin-right: 13px; flex: none; }
.thumb.sel { outline: 2px solid #7cd0ee; }
.thumb.blank { height: 25px; background: #fff; border: 1px solid #222; }
.lock { width: 17px; height: 17px; margin: 0 15px 0 auto; }
.history .tabs, .info .tabs { border-top: 1px solid #111; height: 25px; }
.history .tabs { height: 26px; }
.snapshot { height: 58px; display: flex; align-items: center; padding-left: 11px; gap: 6px; border-bottom: 1px solid #aaa; }
.mini { width: 56px; height: 43px; border: 1px solid #222; background: #fff; font: bold 4px/30px Roboto, sans-serif; text-align: center; white-space: nowrap; }
.state { height: 23px; display: flex; align-items: center; gap: 11px; padding-left: 17px; background: linear-gradient(#6a9ed8, #5580b4); color: #1c2a3c; }
.info { height: 250px; background: #dcdddd; }
.pair { display: grid; grid-template-columns: 137px 1fr; padding: 2px 0 0 17px; border-bottom: 1px solid #c4c4c4; }
.pair.top { height: 119px; }
.pair.bottom { height: 63px; }
.pair .select { width: 100px; height: 23px; display: flex; }
.pair dl { display: grid; grid-template-columns: 34px 48px; line-height: 16px; padding-top: 6px; text-align: right; }
.pair.bottom dl { padding-top: 3px; }
.pair h4 { height: 23px; line-height: 26px; padding-left: 2px; }
.info p { padding: 12px 0 0 10px; color: #222; }

/* task bar */
.taskbar { height: 59px; display: flex; padding-top: 3px; border-top: 1px solid #222; }
.taskbar button { flex-direction: column; justify-content: flex-end; width: 62px; position: relative; padding-bottom: 1px; white-space: nowrap; }
.taskbar button > svg { margin: auto; }
.taskbar .bin, .taskbar .tool { background: repeating-linear-gradient(#444 0 2px, transparent 2px 5px) 100% 3px / 1px 44px no-repeat; }
.taskbar .bin { width: 73px; }
.taskbar .tool { width: 77px; }
.taskbar .tool > svg { background: #c4c4c4; border: 1px solid #a4a4a4; border-radius: 3px; margin-top: 0; }
.has::after { position: absolute; right: 3px; top: 16px; width: 7px; height: 4px; }
.has.low::after { right: 16px; top: 29px; }
.taskbar .more { margin-left: auto; margin-right: 7px; }

/* floating panel and dialog */
.floating { position: absolute; top: 45px; right: 300px; width: 273px; border: 1px solid #666; border-top: 0; border-radius: 4px 4px 0 0; background: #ddd; padding-bottom: 2px; box-shadow: 0 2px 5px #0005; }
.grip { height: 14px; background: #505050; color: #fff; border-radius: 4px 4px 0 0; padding-left: 4px; font-size: 14px; line-height: 14px; }
.floating .tabs { height: 23px; }
.dialog { position: absolute; left: 646px; top: 562px; width: 420px; border-radius: 5px; background: #ececec; box-shadow: 0 18px 36px #0009, 0 0 2px #0006; padding-bottom: 20px; font-size: 13px; }
.dialog h1 { height: 22px; line-height: 23px; text-align: center; background: linear-gradient(#e6e6e6, #d0d0d0); border-bottom: 1px solid #b4b4b4; border-radius: 5px 5px 0 0; color: #333; }
.dlg-body { display: flex; padding: 17px 0 0 25px; gap: 19px; }
.dlg-text p { font-weight: 700; line-height: 17px; color: #000; white-space: nowrap; }
.dlg-body svg { margin-top: 2px; }
.dlg-text label { display: flex; align-items: center; gap: 4px; margin-top: 12px; color: #333; }
.dlg-text input { appearance: none; width: 14px; height: 14px; margin-left: 1px; border: 1px solid #bbb; border-radius: 3px; background: #fff; }
.ok { width: 79px; height: 21px; margin: 18px 20px 0 auto; background: #fff; border: 1px solid #c0c0c0; border-radius: 4px; }
```
